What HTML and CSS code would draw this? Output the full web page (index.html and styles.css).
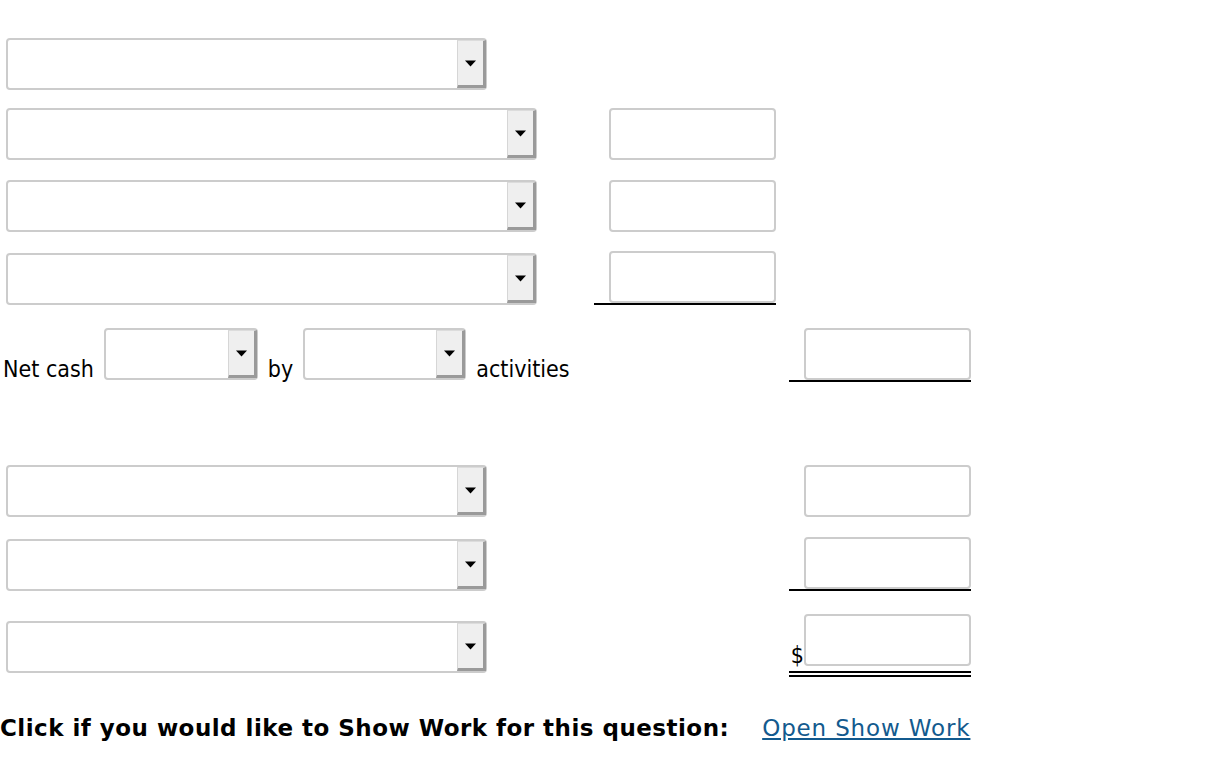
FILE: index.html
```html
<!DOCTYPE html>
<html lang="en">
<head>
<meta charset="utf-8">
<title>Cash flow worksheet</title>
<link rel="stylesheet" href="styles.css">
</head>
<body>
<div class="sheet">
  <div class="row r1">
    <div class="cell a"><div class="select w-481"><span class="btn"><svg class="arrow" width="11" height="7" viewBox="0 0 11 7"><polygon points="0,0.5 11,0.5 5.5,6.5"/></svg></span></div></div>
  </div>
  <div class="row r2">
    <div class="cell a"><div class="select w-531"><span class="btn"><svg class="arrow" width="11" height="7" viewBox="0 0 11 7"><polygon points="0,0.5 11,0.5 5.5,6.5"/></svg></span></div></div>
    <div class="cell b"><div class="field"></div></div>
  </div>
  <div class="row r3">
    <div class="cell a"><div class="select w-531"><span class="btn"><svg class="arrow" width="11" height="7" viewBox="0 0 11 7"><polygon points="0,0.5 11,0.5 5.5,6.5"/></svg></span></div></div>
    <div class="cell b"><div class="field"></div></div>
  </div>
  <div class="row r4">
    <div class="cell a"><div class="select w-531"><span class="btn"><svg class="arrow" width="11" height="7" viewBox="0 0 11 7"><polygon points="0,0.5 11,0.5 5.5,6.5"/></svg></span></div></div>
    <div class="cell b ruled"><div class="field"></div></div>
  </div>
  <div class="row r5">
    <div class="cell a inline">
      <span class="lbl first">Net cash</span>
      <div class="select w-154"><span class="btn"><svg class="arrow" width="11" height="7" viewBox="0 0 11 7"><polygon points="0,0.5 11,0.5 5.5,6.5"/></svg></span></div>
      <span class="lbl">by</span>
      <div class="select w-163"><span class="btn"><svg class="arrow" width="11" height="7" viewBox="0 0 11 7"><polygon points="0,0.5 11,0.5 5.5,6.5"/></svg></span></div>
      <span class="lbl">activities</span>
    </div>
    <div class="cell c ruled"><div class="field"></div></div>
  </div>
  <div class="row r6">
    <div class="cell a"><div class="select w-481"><span class="btn"><svg class="arrow" width="11" height="7" viewBox="0 0 11 7"><polygon points="0,0.5 11,0.5 5.5,6.5"/></svg></span></div></div>
    <div class="cell c"><div class="field"></div></div>
  </div>
  <div class="row r7">
    <div class="cell a"><div class="select w-481"><span class="btn"><svg class="arrow" width="11" height="7" viewBox="0 0 11 7"><polygon points="0,0.5 11,0.5 5.5,6.5"/></svg></span></div></div>
    <div class="cell c ruled"><div class="field"></div></div>
  </div>
  <div class="row r8">
    <div class="cell a"><div class="select w-481 lift"><span class="btn"><svg class="arrow" width="11" height="7" viewBox="0 0 11 7"><polygon points="0,0.5 11,0.5 5.5,6.5"/></svg></span></div></div>
    <div class="cell c total"><span class="cur">$</span><div class="field"></div></div>
  </div>
  <div class="showwork">
    <span class="prompt">Click if you would like to Show Work for this question:</span>
    <a class="link" href="#">Open Show Work</a>
  </div>
</div>
</body>
</html>
```
FILE: styles.css
```css
html, body {
  margin: 0;
  padding: 0;
  background: #ffffff;
}

body {
  font-family: "DejaVu Sans", Verdana, sans-serif;
  color: #000000;
}

.sheet {
  padding-top: 38px;
}

.row {
  display: grid;
  grid-template-columns: 581px 182px 182px;
  column-gap: 13px;
  align-items: end;
}

.r2 { margin-top: 18px; }
.r3 { margin-top: 20px; }
.r4 { margin-top: 19px; }
.r5 { margin-top: 23px; align-items: start; }
.r6 { margin-top: 83px; }
.r7 { margin-top: 20px; }
.r8 { margin-top: 23px; }

.cell.a { grid-column: 1; padding-left: 6px; }
.cell.b { grid-column: 2; display: flex; justify-content: flex-end; }
.cell.c { grid-column: 3; display: flex; justify-content: flex-end; }

.cell.inline {
  padding-left: 0;
  display: flex;
  align-items: flex-end;
  gap: 10px;
}

.ruled {
  border-bottom: 2px solid #000000;
}

.total {
  justify-content: space-between;
  align-items: flex-end;
  padding-bottom: 5px;
  border-bottom: 6px double #000000;
}

.select {
  box-sizing: border-box;
  height: 52px;
  border: 2px solid #cccccc;
  border-radius: 4px;
  background: #ffffff;
  display: flex;
  justify-content: flex-end;
}

.select.lift { margin-bottom: 4px; }

.w-481 { width: 481px; }
.w-531 { width: 531px; }
.w-154 { width: 154px; }
.w-163 { width: 163px; }

.btn {
  box-sizing: border-box;
  width: 29px;
  height: 48px;
  margin-right: -1px;
  background: #efefef;
  border-style: solid;
  border-width: 1px 3px 3px 1px;
  border-color: #dcdcdc #9a9a9a #9a9a9a #d6d6d6;
  display: flex;
  align-items: center;
  justify-content: center;
}

.arrow {
  display: block;
  flex: none;
  fill: #000000;
}

.field {
  box-sizing: border-box;
  width: 167px;
  height: 52px;
  border: 2px solid #cccccc;
  border-radius: 4px;
  background: #ffffff;
}

.lbl {
  font-family: "DejaVu Sans Condensed", "DejaVu Sans", sans-serif;
  font-stretch: condensed;
  font-size: 23px;
  line-height: 22px;
  white-space: nowrap;
}

.lbl.first { padding-left: 3px; }

.cur {
  font-family: "DejaVu Sans Condensed", "DejaVu Sans", sans-serif;
  font-stretch: condensed;
  font-size: 23px;
  line-height: 21px;
}

.showwork {
  margin-top: 38px;
  display: flex;
  align-items: baseline;
  gap: 33px;
  line-height: 27px;
  font-size: 23px;
}

.prompt {
  font-weight: bold;
  letter-spacing: 0.48px;
  white-space: nowrap;
}

.link {
  color: #135a8e;
  letter-spacing: 0.85px;
  text-decoration: underline;
  white-space: nowrap;
}
```
